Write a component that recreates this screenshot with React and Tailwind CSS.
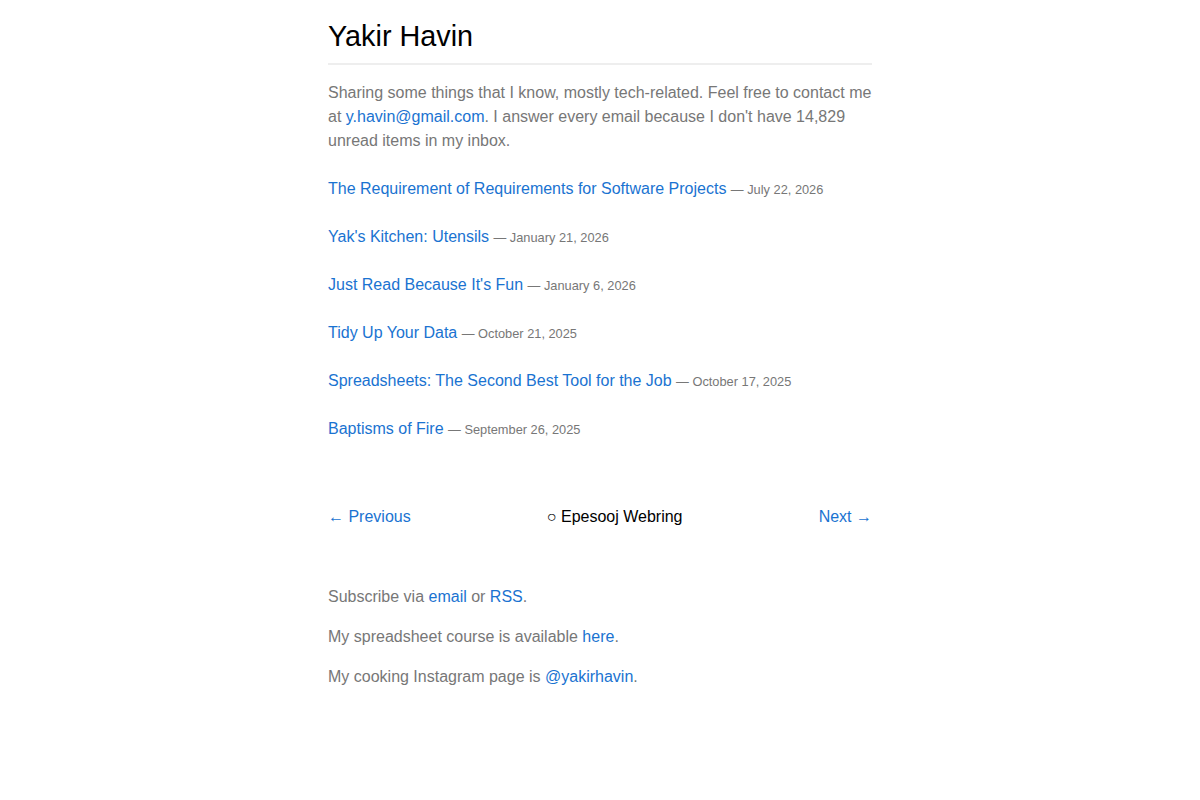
const posts = [
  { title: "The Requirement of Requirements for Software Projects", date: "July 22, 2026" },
  { title: "Yak's Kitchen: Utensils", date: "January 21, 2026" },
  { title: "Just Read Because It's Fun", date: "January 6, 2026" },
  { title: "Tidy Up Your Data", date: "October 21, 2025" },
  { title: "Spreadsheets: The Second Best Tool for the Job", date: "October 17, 2025" },
  { title: "Baptisms of Fire", date: "September 26, 2025" },
];

const link = "text-[#1a73d1] no-underline hover:underline";

export default function App() {
  return (
    <div className="min-h-screen bg-white font-['Liberation_Sans',Arial,sans-serif] text-[16px] leading-6 text-[#777777]">
      <div className="mx-auto w-[544px] pt-[18px]">
        <header className="border-b-2 border-[#eeeeee] pb-[9px]">
          <h1 className="text-[28.8px] leading-[36px] font-normal text-black">Yakir Havin</h1>
        </header>

        <p className="mt-4">
          Sharing some things that I know, mostly tech-related. Feel free to contact me at{" "}
          <a href="#" className={link}>y.havin@gmail.com</a>. I answer every email because I don't have 14,829
          unread items in my inbox.
        </p>

        <ul className="mt-6 flex flex-col gap-6">
          {posts.map((p) => (
            <li key={p.title} className="h-6">
              <a href="#" className={link}>{p.title}</a>{" "}
              <span className="text-[12.8px] leading-none">— {p.date}</span>
            </li>
          ))}
        </ul>

        <nav className="mt-16 flex h-6 items-center justify-between">
          <a href="#" className={link}><span className="leading-none">←</span> Previous</a>
          <span className="text-black"><span className="leading-none">○</span> Epesooj Webring</span>
          <a href="#" className={link}>Next <span className="leading-none">→</span></a>
        </nav>

        <footer className="mt-14 flex flex-col gap-4">
          <p>
            Subscribe via <a href="#" className={link}>email</a> or <a href="#" className={link}>RSS</a>.
          </p>
          <p>
            My spreadsheet course is available <a href="#" className={link}>here</a>.
          </p>
          <p>
            My cooking Instagram page is <a href="#" className={link}>@yakirhavin</a>.
          </p>
        </footer>
      </div>
    </div>
  );
}
